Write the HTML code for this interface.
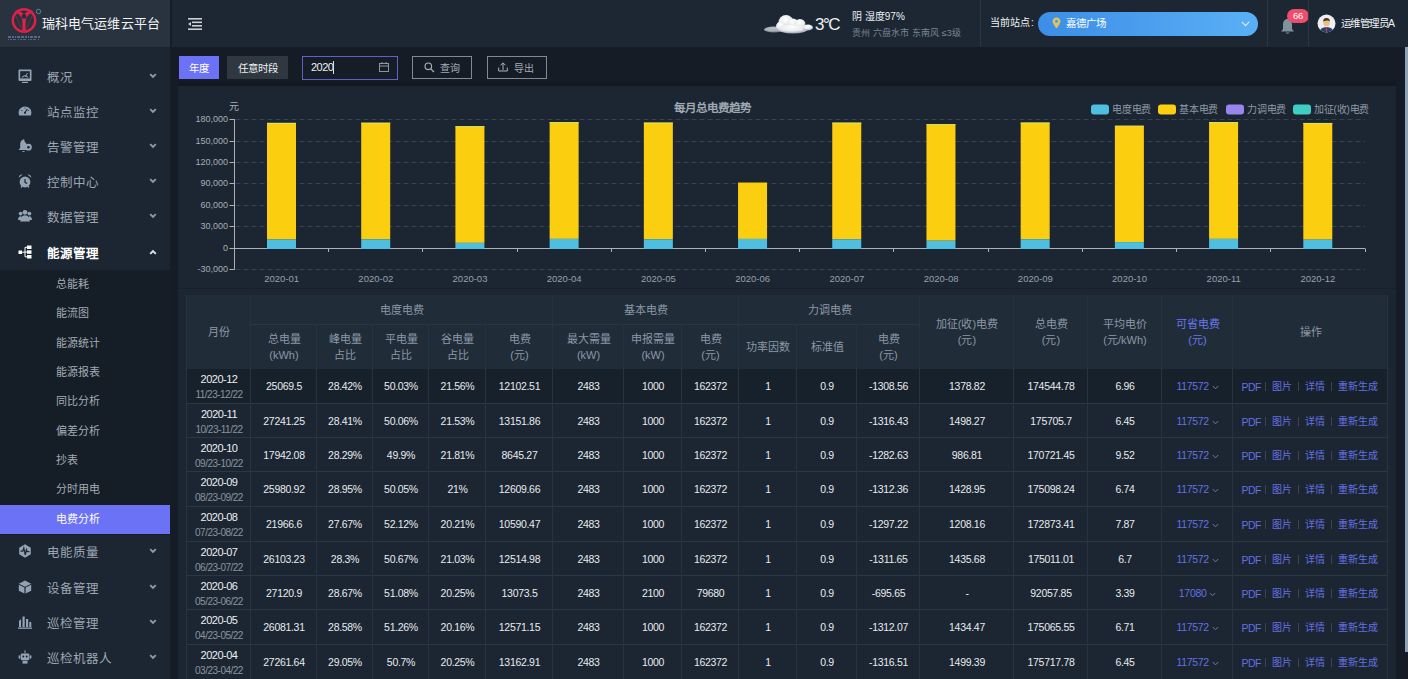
<!DOCTYPE html><html lang="zh-CN"><head><meta charset="utf-8"><title>电费分析</title><style>
*{margin:0;padding:0;box-sizing:border-box}
html,body{width:1408px;height:679px;overflow:hidden;background:#151c25;font-family:"Liberation Sans",sans-serif;color:#fff}
.a{position:absolute}
.t{position:absolute;white-space:nowrap;line-height:1}
.menu{position:absolute;left:0;width:170px;height:35px}
.menu .ic{position:absolute;left:18px;top:10px;width:14px;height:14px}
.menu .lb{position:absolute;left:47px;top:12px;font-size:12.5px;color:#9ba6b2;line-height:14px;white-space:nowrap}
.menu .ch{position:absolute;left:149px;top:14px;width:8px;height:6px}
.sub{position:absolute;left:0;width:170px;height:29px}
.sub .lb{position:absolute;left:56px;top:8px;font-size:11px;color:#a3acb6;line-height:13px;white-space:nowrap}
.cell{position:absolute;display:flex;align-items:center;justify-content:center;text-align:center;border-right:1px solid #2b3540;border-bottom:1px solid #2b3540}
.hd{color:#8795a4;font-size:11.5px;line-height:16px;background:#222c38}
.num{font-size:10.5px;letter-spacing:-0.3px;color:#e8ebee}
</style></head><body>
<div class="a" style="left:0;top:0;width:1408px;height:47px;background:#1c2733"></div>
<div class="a" style="left:0;top:0;width:170px;height:47px;background:#28333f"></div>
<div class="a" style="left:170px;top:0;width:2px;height:47px;background:#161d26"></div>
<svg class="a" style="left:6px;top:4px" width="38" height="40" viewBox="0 0 38 40">
<circle cx="18" cy="16.5" r="11.2" fill="none" stroke="#de2148" stroke-width="2.4"/>
<path d="M8.5 8.5 Q15 9.5 16.3 17 L16.6 28 L19.4 28 L19.7 17 Q21 9.5 27.5 8.5 L26 6.5 Q20.5 7 18 10.5 Q15.5 7 10 6.5 Z" fill="#de2148"/>
<circle cx="18" cy="12.5" r="2.4" fill="#26303c"/>
<path d="M10 12 Q13 18 16 26 M26 12 Q23 18 20 26" stroke="#de2148" stroke-width="0.8" fill="none" opacity="0.5"/>
<circle cx="32.5" cy="7.5" r="2.2" fill="none" stroke="#6f8a86" stroke-width="0.9"/>
<path d="M2 33 L34 33" stroke="#7484b8" stroke-width="1.6" stroke-dasharray="3,1,2,1,1,1,3,1" opacity="0.85"/>
<path d="M2 35.5 L34 35.5" stroke="#7484b8" stroke-width="1.2" stroke-dasharray="1,1,2,1,3,2" opacity="0.6"/>
</svg>
<div class="t" style="left:42px;top:17px;font-size:13px;line-height:13px;color:#f2f4f6;font-weight:500;letter-spacing:0.1px">瑞科电气运维云平台</div>
<svg class="a" style="left:188px;top:18px" width="15" height="12" viewBox="0 0 15 12">
<rect x="0" y="0" width="14" height="1.6" fill="#c9d0d8"/><rect x="4" y="3.5" width="10" height="1.6" fill="#c9d0d8"/>
<rect x="4" y="7" width="10" height="1.6" fill="#c9d0d8"/><rect x="0" y="10.4" width="14" height="1.6" fill="#c9d0d8"/>
<path d="M0 6 L3 4 L3 8 Z" fill="#c9d0d8"/></svg>
<svg class="a" style="left:762px;top:12px" width="54" height="24" viewBox="0 0 54 24">
<defs><radialGradient id="cg" cx="45%" cy="30%" r="75%"><stop offset="0" stop-color="#ffffff"/><stop offset="0.55" stop-color="#e8eaee"/><stop offset="1" stop-color="#8c939c"/></radialGradient>
<filter id="bl"><feGaussianBlur stdDeviation="0.5"/></filter></defs>
<g fill="url(#cg)" filter="url(#bl)">
<ellipse cx="12" cy="17.5" rx="10" ry="3" opacity="0.7"/>
<circle cx="24" cy="10.5" r="7.5"/><circle cx="31" cy="12" r="5.5"/><circle cx="38" cy="12.5" r="5.5"/><circle cx="19" cy="14.5" r="5"/>
<ellipse cx="31" cy="17" rx="15" ry="4.5"/><ellipse cx="46" cy="15.5" rx="5" ry="3"/>
</g></svg>
<div class="t" style="left:815px;top:15.5px;font-size:17px;letter-spacing:-1.5px;color:#eef2f4">3°C</div>
<div class="t" style="left:852px;top:12px;font-size:10px;color:#eef1f4;font-weight:500">阴 湿度97%</div>
<div class="t" style="left:852px;top:28.5px;font-size:9px;color:#7b8592;letter-spacing:0.1px">贵州 六盘水市 东南风 ≤3级</div>
<div class="a" style="left:980px;top:0;width:1px;height:47px;background:#2c3541"></div>
<div class="t" style="left:990px;top:18px;font-size:10px;color:#f0f2f4;font-weight:500">当前站点<span style="margin-left:1px">:</span></div>
<div class="a" style="left:1038px;top:12px;width:220px;height:24px;border-radius:12px;background:linear-gradient(90deg,#3c8de6,#5ab0f6)"></div>
<svg class="a" style="left:1052px;top:17px" width="9" height="12" viewBox="0 0 9 12"><path d="M4.5 0.5 C2 0.5 0.6 2.4 0.6 4.3 C0.6 7 4.5 11.5 4.5 11.5 C4.5 11.5 8.4 7 8.4 4.3 C8.4 2.4 7 0.5 4.5 0.5 Z" fill="#e0c35a"/><circle cx="4.5" cy="4.3" r="1.5" fill="#4a9bea"/></svg>
<div class="t" style="left:1066px;top:18px;font-size:10.5px;color:#fff">嘉德广场</div>
<svg class="a" style="left:1241px;top:21px" width="9" height="6" viewBox="0 0 9 6"><path d="M0.8 0.8 L4.5 4.6 L8.2 0.8" fill="none" stroke="#dbe8f6" stroke-width="1.2"/></svg>
<div class="a" style="left:1267px;top:0;width:1px;height:47px;background:#2c3541"></div>
<svg class="a" style="left:1280px;top:18px" width="15" height="17" viewBox="0 0 15 17"><path d="M7.5 1 C4.5 1 3 3.5 3 6.5 L3 11 L1 13.5 L14 13.5 L12 11 L12 6.5 C12 3.5 10.5 1 7.5 1 Z" fill="#7f929e"/><path d="M5.5 14.5 Q7.5 17 9.5 14.5 Z" fill="#7f929e"/></svg>
<div class="a" style="left:1287px;top:8.5px;width:22px;height:14px;border-radius:7px;background:#ee4d6b"></div>
<div class="t" style="left:1287px;top:11px;width:22px;text-align:center;font-size:9.5px;color:#fff;letter-spacing:-0.3px">66</div>
<div class="a" style="left:1308px;top:0;width:1px;height:47px;background:#2c3541"></div>
<svg class="a" style="left:1317px;top:14px" width="19" height="19" viewBox="0 0 19 19">
<defs><clipPath id="av"><circle cx="9.5" cy="9.5" r="9"/></clipPath></defs>
<circle cx="9.5" cy="9.5" r="9" fill="#eceef4"/>
<g clip-path="url(#av)"><path d="M2 19 Q3 13 9.5 13 Q16 13 17 19 Z" fill="#27406a"/><path d="M8.6 13 L10.4 13 L10 18 L9 18 Z" fill="#b04060"/>
<ellipse cx="9.5" cy="8.5" rx="3.2" ry="3.8" fill="#eac27a"/><path d="M6.2 7.5 Q6 4 9.5 4 Q13 4 12.8 7.5 Q11 5.6 6.2 7.5 Z" fill="#4a3520"/></g></svg>
<div class="t" style="left:1341px;top:18px;font-size:10.5px;color:#f0f2f4;font-weight:500;letter-spacing:-0.6px">运维管理员A</div>
<div class="a" style="left:1405px;top:47px;width:3px;height:605px;background:#8ea2b4"></div>
<div class="a" style="left:0;top:47px;width:170px;height:632px;background:#1b2632"></div>
<div class="a" style="left:0;top:270px;width:170px;height:265px;background:#151d26"></div>
<div class="a" style="left:0;top:505px;width:170px;height:29px;background:#6b72f6"></div>
<div class="menu" style="top:59px"><svg class="ic" width="14" height="14" viewBox="0 0 14 14"><rect x="0.5" y="0.5" width="13" height="11.5" rx="1" fill="#94a3b3"/><rect x="2.2" y="2.2" width="9.6" height="7.2" fill="#1c2530"/><path d="M3.6 8.6 A3.6 3.6 0 0 1 10.4 8.6 L9 8.6 A2.2 2.2 0 0 0 5 8.6 Z" fill="#94a3b3"/><path d="M7 8 L9.5 4" stroke="#94a3b3" stroke-width="1"/><rect x="4" y="12.8" width="6" height="1.2" fill="#94a3b3"/></svg><div class="lb">概况</div><svg class="ch" width="8" height="6" viewBox="0 0 8 6"><path d="M1.2 1.2 L4 4 L6.8 1.2" fill="none" stroke="#8d9aa8" stroke-width="1.9"/></svg></div>
<div class="menu" style="top:94px"><svg class="ic" width="14" height="14" viewBox="0 0 14 14"><path d="M1.2 11.5 A6.4 6.4 0 1 1 12.8 11.5 Z" fill="#94a3b3"/><path d="M7 8.5 L9.3 5" stroke="#1c2530" stroke-width="1.1"/><circle cx="7" cy="8.8" r="1.1" fill="#1c2530"/><circle cx="3.8" cy="6.5" r="0.6" fill="#1c2530"/><circle cx="7" cy="4" r="0.6" fill="#1c2530"/><circle cx="10.2" cy="6.5" r="0.6" fill="#1c2530"/><path d="M#94a3b3" fill="none"/></svg><div class="lb">站点监控</div><svg class="ch" width="8" height="6" viewBox="0 0 8 6"><path d="M1.2 1.2 L4 4 L6.8 1.2" fill="none" stroke="#8d9aa8" stroke-width="1.9"/></svg></div>
<div class="menu" style="top:129px"><svg class="ic" width="14" height="14" viewBox="0 0 14 14"><path d="M5.5 1 C3 1 2.2 3 2.2 5.5 L2.2 8.8 L0.6 11 L9.5 11 L8.6 9 L8.6 5" fill="#94a3b3"/><circle cx="5.5" cy="1.2" r="1" fill="#94a3b3"/><circle cx="10.4" cy="8.2" r="3.4" fill="#94a3b3"/><circle cx="10.4" cy="8.2" r="1.3" fill="#1c2530"/><path d="M4 12 Q5.5 14 7 12 Z" fill="#94a3b3"/></svg><div class="lb">告警管理</div><svg class="ch" width="8" height="6" viewBox="0 0 8 6"><path d="M1.2 1.2 L4 4 L6.8 1.2" fill="none" stroke="#8d9aa8" stroke-width="1.9"/></svg></div>
<div class="menu" style="top:164px"><svg class="ic" width="14" height="14" viewBox="0 0 14 14"><circle cx="7" cy="8" r="5.4" fill="#94a3b3"/><path d="M0.8 3.8 A3 3 0 0 1 4.6 0.6 Z M13.2 3.8 A3 3 0 0 0 9.4 0.6 Z" fill="#94a3b3"/><path d="M3 13.5 L4.3 12 M11 13.5 L9.7 12" stroke="#94a3b3" stroke-width="1.2"/><path d="M7 5 L7 8.3 L9.2 9.6" fill="none" stroke="#1c2530" stroke-width="1.2"/></svg><div class="lb">控制中心</div><svg class="ch" width="8" height="6" viewBox="0 0 8 6"><path d="M1.2 1.2 L4 4 L6.8 1.2" fill="none" stroke="#8d9aa8" stroke-width="1.9"/></svg></div>
<div class="menu" style="top:199px"><svg class="ic" width="14" height="14" viewBox="0 0 14 14"><circle cx="7" cy="3.3" r="2.4" fill="#94a3b3"/><circle cx="2.6" cy="4.6" r="1.9" fill="#94a3b3"/><circle cx="11.4" cy="4.6" r="1.9" fill="#94a3b3"/><path d="M2.2 12.5 Q2.2 6.3 7 6.3 Q11.8 6.3 11.8 12.5 Z" fill="#94a3b3"/><path d="M0 11 Q0 7.2 3 7.2 L3.2 11 Z M14 11 Q14 7.2 11 7.2 L10.8 11 Z" fill="#94a3b3"/></svg><div class="lb">数据管理</div><svg class="ch" width="8" height="6" viewBox="0 0 8 6"><path d="M1.2 1.2 L4 4 L6.8 1.2" fill="none" stroke="#8d9aa8" stroke-width="1.9"/></svg></div>
<div class="menu" style="top:235px"><svg class="ic" width="14" height="14" viewBox="0 0 14 14"><rect x="0.5" y="5.5" width="3.5" height="3.5" fill="#ffffff"/><rect x="9" y="0.5" width="4.5" height="3.5" fill="#ffffff"/><rect x="9" y="5.3" width="4.5" height="3.5" fill="#ffffff"/><rect x="9" y="10" width="4.5" height="3.5" fill="#ffffff"/><path d="M4 7.2 L7 7.2 M7 2.3 L7 11.8 M7 2.3 L9 2.3 M7 7 L9 7 M7 11.8 L9 11.8" stroke="#ffffff" stroke-width="1" fill="none"/><path d="M#fff" fill="none"/></svg><div class="lb" style="color:#fff;font-weight:bold">能源管理</div><svg class="ch" width="8" height="6" viewBox="0 0 8 6"><path d="M1.2 4.8 L4 2 L6.8 4.8" fill="none" stroke="#e0e4e8" stroke-width="1.9"/></svg></div>
<div class="sub" style="top:270px"><div class="lb" style="color:#a3acb6">总能耗</div></div>
<div class="sub" style="top:299px"><div class="lb" style="color:#a3acb6">能流图</div></div>
<div class="sub" style="top:329px"><div class="lb" style="color:#a3acb6">能源统计</div></div>
<div class="sub" style="top:358px"><div class="lb" style="color:#a3acb6">能源报表</div></div>
<div class="sub" style="top:387px"><div class="lb" style="color:#a3acb6">同比分析</div></div>
<div class="sub" style="top:417px"><div class="lb" style="color:#a3acb6">偏差分析</div></div>
<div class="sub" style="top:446px"><div class="lb" style="color:#a3acb6">抄表</div></div>
<div class="sub" style="top:475px"><div class="lb" style="color:#a3acb6">分时用电</div></div>
<div class="sub" style="top:505px"><div class="lb" style="color:#ffffff">电费分析</div></div>
<div class="menu" style="top:534px"><svg class="ic" width="14" height="14" viewBox="0 0 14 14"><path d="M7 0.3 L12.8 3.65 L12.8 10.35 L7 13.7 L1.2 10.35 L1.2 3.65 Z" fill="#94a3b3"/><path d="M2.6 7.2 L4.8 7.2 L5.8 4 L7.3 11 L8.4 5.6 L9.2 7.6 L11.4 7.6" fill="none" stroke="#1c2530" stroke-width="1.2"/></svg><div class="lb">电能质量</div><svg class="ch" width="8" height="6" viewBox="0 0 8 6"><path d="M1.2 1.2 L4 4 L6.8 1.2" fill="none" stroke="#8d9aa8" stroke-width="1.9"/></svg></div>
<div class="menu" style="top:570px"><svg class="ic" width="14" height="14" viewBox="0 0 14 14"><path d="M7 0.6 L13.2 3.7 L7 6.8 L0.8 3.7 Z" fill="#94a3b3"/><path d="M0.8 4.8 L6.4 7.6 L6.4 13.6 L0.8 10.8 Z M13.2 4.8 L7.6 7.6 L7.6 13.6 L13.2 10.8 Z" fill="#94a3b3"/></svg><div class="lb">设备管理</div><svg class="ch" width="8" height="6" viewBox="0 0 8 6"><path d="M1.2 1.2 L4 4 L6.8 1.2" fill="none" stroke="#8d9aa8" stroke-width="1.9"/></svg></div>
<div class="menu" style="top:605px"><svg class="ic" width="14" height="14" viewBox="0 0 14 14"><path d="M1 12 L1 6 L3 4 L3 12 Z" fill="#94a3b3"/><rect x="4.5" y="1.5" width="2.2" height="10.5" fill="#94a3b3"/><rect x="8" y="4" width="2.2" height="8" fill="#94a3b3"/><rect x="11.3" y="7" width="2" height="5" fill="#94a3b3"/><rect x="0" y="12.5" width="14" height="1.3" fill="#94a3b3"/></svg><div class="lb">巡检管理</div><svg class="ch" width="8" height="6" viewBox="0 0 8 6"><path d="M1.2 1.2 L4 4 L6.8 1.2" fill="none" stroke="#8d9aa8" stroke-width="1.9"/></svg></div>
<div class="menu" style="top:640px"><svg class="ic" width="14" height="14" viewBox="0 0 14 14"><rect x="2.8" y="3.5" width="8.4" height="6.8" rx="1" fill="#94a3b3"/><rect x="4.5" y="10.8" width="5" height="2.8" fill="#94a3b3"/><rect x="6.5" y="0.3" width="1" height="3" fill="#94a3b3"/><rect x="0.6" y="5.3" width="1.8" height="3.4" rx="0.8" fill="#94a3b3"/><rect x="11.6" y="5.3" width="1.8" height="3.4" rx="0.8" fill="#94a3b3"/><circle cx="5.3" cy="6.6" r="1" fill="#1c2530"/><circle cx="8.7" cy="6.6" r="1" fill="#1c2530"/></svg><div class="lb">巡检机器人</div><svg class="ch" width="8" height="6" viewBox="0 0 8 6"><path d="M1.2 1.2 L4 4 L6.8 1.2" fill="none" stroke="#8d9aa8" stroke-width="1.9"/></svg></div>
<div class="a" style="left:179px;top:56px;width:40px;height:23px;background:#6b72f6"></div>
<div class="t" style="left:179px;top:62.5px;width:40px;text-align:center;font-size:10.5px;color:#fff">年度</div>
<div class="a" style="left:227px;top:56px;width:61px;height:23px;background:#2f3741"></div>
<div class="t" style="left:227px;top:62.5px;width:61px;text-align:center;font-size:10.5px;color:#eef0f2">任意时段</div>
<div class="a" style="left:302px;top:55.5px;width:96px;height:24px;border:1.5px solid #5d62c8;background:#161d27"></div>
<div class="t" style="left:311px;top:62px;font-size:11px;color:#eef0f2;letter-spacing:-0.5px">2020</div>
<div class="a" style="left:333px;top:61px;width:1px;height:13px;background:#e0e0e0"></div>
<svg class="a" style="left:379px;top:62px" width="10" height="10" viewBox="0 0 10 10"><rect x="0.5" y="1.5" width="9" height="8" fill="none" stroke="#9aa4ae" stroke-width="0.9"/><path d="M0.5 4 L9.5 4 M3 0 L3 2 M7 0 L7 2" stroke="#9aa4ae" stroke-width="0.9"/></svg>
<div class="a" style="left:412px;top:56px;width:60px;height:23px;border:1px solid #7f8a96"></div>
<svg class="a" style="left:424px;top:62px" width="11" height="11" viewBox="0 0 11 11"><circle cx="4.3" cy="4.3" r="3.3" fill="none" stroke="#aab3bd" stroke-width="1.1"/><path d="M6.8 6.8 L10 10" stroke="#aab3bd" stroke-width="1.2"/></svg>
<div class="t" style="left:440px;top:63.5px;font-size:10px;color:#a3acb6">查询</div>
<div class="a" style="left:487px;top:56px;width:60px;height:23px;border:1px solid #7f8a96"></div>
<svg class="a" style="left:498px;top:62px" width="10" height="10" viewBox="0 0 10 10"><path d="M5 1 L5 8 M2.5 3.3 L5 0.8 L7.5 3.3 M0.7 5.5 L0.7 9 L9.3 9 L9.3 5.5" fill="none" stroke="#aab3bd" stroke-width="1"/></svg>
<div class="t" style="left:514px;top:63.5px;font-size:10px;color:#a3acb6">导出</div>
<div class="a" style="left:178px;top:86px;width:1218px;height:593px;background:#1b2632"></div>
<div class="a" style="left:178px;top:288px;width:1218px;height:1px;background:#18212b"></div><div class="a" style="left:178px;top:81px;width:1218px;height:5px;background:#121922"></div>
<svg class="a" style="left:178px;top:85px" width="1218" height="202" viewBox="178 85 1218 202"><line x1="235.5" y1="119.5" x2="1365.0" y2="119.5" stroke="#38424e" stroke-width="1" stroke-dasharray="5,3"/><line x1="229.5" y1="119.5" x2="234.5" y2="119.5" stroke="#a9b1ba" stroke-width="1"/><text x="228.0" y="122.0" text-anchor="end" font-size="9" fill="#a5aeb8" font-family="Liberation Sans">180,000</text><line x1="235.5" y1="141.5" x2="1365.0" y2="141.5" stroke="#38424e" stroke-width="1" stroke-dasharray="5,3"/><line x1="229.5" y1="141.5" x2="234.5" y2="141.5" stroke="#a9b1ba" stroke-width="1"/><text x="228.0" y="144.0" text-anchor="end" font-size="9" fill="#a5aeb8" font-family="Liberation Sans">150,000</text><line x1="235.5" y1="162.5" x2="1365.0" y2="162.5" stroke="#38424e" stroke-width="1" stroke-dasharray="5,3"/><line x1="229.5" y1="162.5" x2="234.5" y2="162.5" stroke="#a9b1ba" stroke-width="1"/><text x="228.0" y="165.0" text-anchor="end" font-size="9" fill="#a5aeb8" font-family="Liberation Sans">120,000</text><line x1="235.5" y1="183.5" x2="1365.0" y2="183.5" stroke="#38424e" stroke-width="1" stroke-dasharray="5,3"/><line x1="229.5" y1="183.5" x2="234.5" y2="183.5" stroke="#a9b1ba" stroke-width="1"/><text x="228.0" y="186.0" text-anchor="end" font-size="9" fill="#a5aeb8" font-family="Liberation Sans">90,000</text><line x1="235.5" y1="205.5" x2="1365.0" y2="205.5" stroke="#38424e" stroke-width="1" stroke-dasharray="5,3"/><line x1="229.5" y1="205.5" x2="234.5" y2="205.5" stroke="#a9b1ba" stroke-width="1"/><text x="228.0" y="208.0" text-anchor="end" font-size="9" fill="#a5aeb8" font-family="Liberation Sans">60,000</text><line x1="235.5" y1="226.5" x2="1365.0" y2="226.5" stroke="#38424e" stroke-width="1" stroke-dasharray="5,3"/><line x1="229.5" y1="226.5" x2="234.5" y2="226.5" stroke="#a9b1ba" stroke-width="1"/><text x="228.0" y="229.0" text-anchor="end" font-size="9" fill="#a5aeb8" font-family="Liberation Sans">30,000</text><line x1="235.5" y1="269.5" x2="1365.0" y2="269.5" stroke="#38424e" stroke-width="1" stroke-dasharray="5,3"/><line x1="229.5" y1="269.5" x2="234.5" y2="269.5" stroke="#a9b1ba" stroke-width="1"/><text x="228.0" y="272.0" text-anchor="end" font-size="9" fill="#a5aeb8" font-family="Liberation Sans">-30,000</text><text x="228.0" y="251.0" text-anchor="end" font-size="9" fill="#a5aeb8" font-family="Liberation Sans">0</text><text x="229" y="109.5" font-size="10" fill="#a5aeb8">元</text><text x="281.6" y="281.5" text-anchor="middle" font-size="9.5" fill="#98a1ab">2020-01</text><text x="375.8" y="281.5" text-anchor="middle" font-size="9.5" fill="#98a1ab">2020-02</text><text x="470.0" y="281.5" text-anchor="middle" font-size="9.5" fill="#98a1ab">2020-03</text><text x="564.2" y="281.5" text-anchor="middle" font-size="9.5" fill="#98a1ab">2020-04</text><text x="658.4" y="281.5" text-anchor="middle" font-size="9.5" fill="#98a1ab">2020-05</text><text x="752.6" y="281.5" text-anchor="middle" font-size="9.5" fill="#98a1ab">2020-06</text><text x="846.9" y="281.5" text-anchor="middle" font-size="9.5" fill="#98a1ab">2020-07</text><text x="941.1" y="281.5" text-anchor="middle" font-size="9.5" fill="#98a1ab">2020-08</text><text x="1035.3" y="281.5" text-anchor="middle" font-size="9.5" fill="#98a1ab">2020-09</text><text x="1129.5" y="281.5" text-anchor="middle" font-size="9.5" fill="#98a1ab">2020-10</text><text x="1223.7" y="281.5" text-anchor="middle" font-size="9.5" fill="#98a1ab">2020-11</text><text x="1317.9" y="281.5" text-anchor="middle" font-size="9.5" fill="#98a1ab">2020-12</text><line x1="229.5" y1="248.5" x2="1365.0" y2="248.5" stroke="#a9b1ba" stroke-width="1"/><line x1="234.5" y1="248.5" x2="234.5" y2="252.0" stroke="#a9b1ba" stroke-width="1"/><line x1="328.5" y1="248.5" x2="328.5" y2="252.0" stroke="#a9b1ba" stroke-width="1"/><line x1="422.5" y1="248.5" x2="422.5" y2="252.0" stroke="#a9b1ba" stroke-width="1"/><line x1="517.5" y1="248.5" x2="517.5" y2="252.0" stroke="#a9b1ba" stroke-width="1"/><line x1="611.5" y1="248.5" x2="611.5" y2="252.0" stroke="#a9b1ba" stroke-width="1"/><line x1="705.5" y1="248.5" x2="705.5" y2="252.0" stroke="#a9b1ba" stroke-width="1"/><line x1="799.5" y1="248.5" x2="799.5" y2="252.0" stroke="#a9b1ba" stroke-width="1"/><line x1="893.5" y1="248.5" x2="893.5" y2="252.0" stroke="#a9b1ba" stroke-width="1"/><line x1="988.5" y1="248.5" x2="988.5" y2="252.0" stroke="#a9b1ba" stroke-width="1"/><line x1="1082.5" y1="248.5" x2="1082.5" y2="252.0" stroke="#a9b1ba" stroke-width="1"/><line x1="1176.5" y1="248.5" x2="1176.5" y2="252.0" stroke="#a9b1ba" stroke-width="1"/><line x1="1270.5" y1="248.5" x2="1270.5" y2="252.0" stroke="#a9b1ba" stroke-width="1"/><line x1="1365.5" y1="248.5" x2="1365.5" y2="252.0" stroke="#a9b1ba" stroke-width="1"/><line x1="234.5" y1="119" x2="234.5" y2="269.5" stroke="#a9b1ba" stroke-width="1"/><rect x="267.00" y="122.87" width="29" height="116.62" fill="#fcce10"/><rect x="267.00" y="239.49" width="29" height="9.51" fill="#4ebfe0"/><rect x="267.00" y="122.87" width="29" height="1.00" fill="#d6e66a"/><rect x="361.21" y="122.72" width="29" height="116.62" fill="#fcce10"/><rect x="361.21" y="239.34" width="29" height="9.66" fill="#4ebfe0"/><rect x="361.21" y="122.72" width="29" height="1.00" fill="#d6e66a"/><rect x="455.42" y="126.23" width="29" height="116.62" fill="#fcce10"/><rect x="455.42" y="242.85" width="29" height="6.15" fill="#4ebfe0"/><rect x="455.42" y="126.23" width="29" height="0.93" fill="#d6e66a"/><rect x="549.63" y="122.13" width="29" height="116.74" fill="#fcce10"/><rect x="549.63" y="238.87" width="29" height="10.13" fill="#4ebfe0"/><rect x="549.63" y="122.13" width="29" height="1.00" fill="#d6e66a"/><rect x="643.84" y="122.60" width="29" height="116.69" fill="#fcce10"/><rect x="643.84" y="239.29" width="29" height="9.71" fill="#4ebfe0"/><rect x="643.84" y="122.60" width="29" height="1.00" fill="#d6e66a"/><rect x="738.05" y="182.53" width="29" height="56.40" fill="#fcce10"/><rect x="738.05" y="238.93" width="29" height="10.07" fill="#4ebfe0"/><rect x="832.25" y="122.64" width="29" height="116.70" fill="#fcce10"/><rect x="832.25" y="239.33" width="29" height="9.67" fill="#4ebfe0"/><rect x="832.25" y="122.64" width="29" height="1.00" fill="#d6e66a"/><rect x="926.46" y="124.18" width="29" height="116.53" fill="#fcce10"/><rect x="926.46" y="240.71" width="29" height="8.29" fill="#4ebfe0"/><rect x="926.46" y="124.18" width="29" height="0.87" fill="#d6e66a"/><rect x="1020.67" y="122.57" width="29" height="116.69" fill="#fcce10"/><rect x="1020.67" y="239.26" width="29" height="9.74" fill="#4ebfe0"/><rect x="1020.67" y="122.57" width="29" height="1.00" fill="#d6e66a"/><rect x="1114.88" y="125.73" width="29" height="116.37" fill="#fcce10"/><rect x="1114.88" y="242.10" width="29" height="6.90" fill="#4ebfe0"/><rect x="1114.88" y="125.73" width="29" height="0.71" fill="#d6e66a"/><rect x="1209.09" y="122.13" width="29" height="116.74" fill="#fcce10"/><rect x="1209.09" y="238.87" width="29" height="10.13" fill="#4ebfe0"/><rect x="1209.09" y="122.13" width="29" height="1.00" fill="#d6e66a"/><rect x="1303.30" y="122.97" width="29" height="116.65" fill="#fcce10"/><rect x="1303.30" y="239.63" width="29" height="9.37" fill="#4ebfe0"/><rect x="1303.30" y="122.97" width="29" height="0.99" fill="#d6e66a"/><text x="712" y="112" text-anchor="middle" font-size="11.5" font-weight="bold" fill="#a0a9b3">每月总电费趋势</text><rect x="1091" y="104.5" width="18" height="10" rx="3" fill="#4ebfe0"/><text x="1112" y="113" font-size="10" fill="#8f99a4" letter-spacing="-0.2">电度电费</text><rect x="1158" y="104.5" width="18" height="10" rx="3" fill="#fcce10"/><text x="1179" y="113" font-size="10" fill="#8f99a4" letter-spacing="-0.2">基本电费</text><rect x="1226" y="104.5" width="18" height="10" rx="3" fill="#9886ee"/><text x="1247" y="113" font-size="10" fill="#8f99a4" letter-spacing="-0.2">力调电费</text><rect x="1293" y="104.5" width="18" height="10" rx="3" fill="#3dd0c2"/><text x="1314" y="113" font-size="10" fill="#8f99a4" letter-spacing="-0.2">加征(收)电费</text></svg>
<div class="a" style="left:187px;top:295px;width:1201px;height:74px;background:#212c39"></div><div class="a" style="left:187px;top:295px;width:64px;height:74px;display:flex;align-items:center;justify-content:center;text-align:center;color:#8b98a6;font-size:11px;line-height:16px;">月份</div><div class="a" style="left:251px;top:295px;width:302px;height:29px;display:flex;align-items:center;justify-content:center;text-align:center;color:#8b98a6;font-size:11px;line-height:16px;">电度电费</div><div class="a" style="left:553px;top:295px;width:186px;height:29px;display:flex;align-items:center;justify-content:center;text-align:center;color:#8b98a6;font-size:11px;line-height:16px;">基本电费</div><div class="a" style="left:739px;top:295px;width:181px;height:29px;display:flex;align-items:center;justify-content:center;text-align:center;color:#8b98a6;font-size:11px;line-height:16px;">力调电费</div><div class="a" style="left:920px;top:295px;width:94px;height:74px;display:flex;align-items:center;justify-content:center;text-align:center;color:#8b98a6;font-size:11px;line-height:16px;">加征(收)电费<br>(元)</div><div class="a" style="left:1014px;top:295px;width:74px;height:74px;display:flex;align-items:center;justify-content:center;text-align:center;color:#8b98a6;font-size:11px;line-height:16px;">总电费<br>(元)</div><div class="a" style="left:1088px;top:295px;width:74px;height:74px;display:flex;align-items:center;justify-content:center;text-align:center;color:#8b98a6;font-size:11px;line-height:16px;">平均电价<br>(元/kWh)</div><div class="a" style="left:1162px;top:295px;width:71px;height:74px;display:flex;align-items:center;justify-content:center;text-align:center;color:#8b98a6;font-size:11px;line-height:16px;color:#6a78f0">可省电费<br>(元)</div><div class="a" style="left:1233px;top:295px;width:155px;height:74px;display:flex;align-items:center;justify-content:center;text-align:center;color:#8b98a6;font-size:11px;line-height:16px;">操作</div><div class="a" style="left:251px;top:324px;width:66px;height:45px;display:flex;align-items:center;justify-content:center;text-align:center;color:#8b98a6;font-size:11px;line-height:16px;">总电量<br>(kWh)</div><div class="a" style="left:317px;top:324px;width:56px;height:45px;display:flex;align-items:center;justify-content:center;text-align:center;color:#8b98a6;font-size:11px;line-height:16px;">峰电量<br>占比</div><div class="a" style="left:373px;top:324px;width:56px;height:45px;display:flex;align-items:center;justify-content:center;text-align:center;color:#8b98a6;font-size:11px;line-height:16px;">平电量<br>占比</div><div class="a" style="left:429px;top:324px;width:57px;height:45px;display:flex;align-items:center;justify-content:center;text-align:center;color:#8b98a6;font-size:11px;line-height:16px;">谷电量<br>占比</div><div class="a" style="left:486px;top:324px;width:67px;height:45px;display:flex;align-items:center;justify-content:center;text-align:center;color:#8b98a6;font-size:11px;line-height:16px;">电费<br>(元)</div><div class="a" style="left:553px;top:324px;width:71px;height:45px;display:flex;align-items:center;justify-content:center;text-align:center;color:#8b98a6;font-size:11px;line-height:16px;">最大需量<br>(kW)</div><div class="a" style="left:624px;top:324px;width:58px;height:45px;display:flex;align-items:center;justify-content:center;text-align:center;color:#8b98a6;font-size:11px;line-height:16px;">申报需量<br>(kW)</div><div class="a" style="left:682px;top:324px;width:57px;height:45px;display:flex;align-items:center;justify-content:center;text-align:center;color:#8b98a6;font-size:11px;line-height:16px;">电费<br>(元)</div><div class="a" style="left:739px;top:324px;width:58px;height:45px;display:flex;align-items:center;justify-content:center;text-align:center;color:#8b98a6;font-size:11px;line-height:16px;">功率因数</div><div class="a" style="left:797px;top:324px;width:60px;height:45px;display:flex;align-items:center;justify-content:center;text-align:center;color:#8b98a6;font-size:11px;line-height:16px;">标准值</div><div class="a" style="left:857px;top:324px;width:63px;height:45px;display:flex;align-items:center;justify-content:center;text-align:center;color:#8b98a6;font-size:11px;line-height:16px;">电费<br>(元)</div><div class="a" style="left:251px;top:324px;width:669px;height:1px;background:#2b3743"></div><div class="a" style="left:187px;top:369px;width:1201px;height:1px;background:#2b3743"></div><div class="a" style="left:187px;top:369px;width:1201px;height:35px;background:#17212b"></div><div class="a" style="left:187px;top:403px;width:1201px;height:1px;background:#2b3743"></div><div class="t" style="left:187px;top:374.0px;width:64px;text-align:center;font-size:11px;letter-spacing:-0.5px;color:#eceff2">2020-12</div><div class="t" style="left:187px;top:390.0px;width:64px;text-align:center;font-size:10px;letter-spacing:-0.5px;color:#8a949f">11/23-12/22</div><div class="t" style="left:251px;top:381.0px;width:66px;text-align:center;font-size:10.5px;letter-spacing:-0.3px;color:#e8ebee">25069.5</div><div class="t" style="left:317px;top:381.0px;width:56px;text-align:center;font-size:10.5px;letter-spacing:-0.3px;color:#e8ebee">28.42%</div><div class="t" style="left:373px;top:381.0px;width:56px;text-align:center;font-size:10.5px;letter-spacing:-0.3px;color:#e8ebee">50.03%</div><div class="t" style="left:429px;top:381.0px;width:57px;text-align:center;font-size:10.5px;letter-spacing:-0.3px;color:#e8ebee">21.56%</div><div class="t" style="left:486px;top:381.0px;width:67px;text-align:center;font-size:10.5px;letter-spacing:-0.3px;color:#e8ebee">12102.51</div><div class="t" style="left:553px;top:381.0px;width:71px;text-align:center;font-size:10.5px;letter-spacing:-0.3px;color:#e8ebee">2483</div><div class="t" style="left:624px;top:381.0px;width:58px;text-align:center;font-size:10.5px;letter-spacing:-0.3px;color:#e8ebee">1000</div><div class="t" style="left:682px;top:381.0px;width:57px;text-align:center;font-size:10.5px;letter-spacing:-0.3px;color:#e8ebee">162372</div><div class="t" style="left:739px;top:381.0px;width:58px;text-align:center;font-size:10.5px;letter-spacing:-0.3px;color:#e8ebee">1</div><div class="t" style="left:797px;top:381.0px;width:60px;text-align:center;font-size:10.5px;letter-spacing:-0.3px;color:#e8ebee">0.9</div><div class="t" style="left:857px;top:381.0px;width:63px;text-align:center;font-size:10.5px;letter-spacing:-0.3px;color:#e8ebee">-1308.56</div><div class="t" style="left:920px;top:381.0px;width:94px;text-align:center;font-size:10.5px;letter-spacing:-0.3px;color:#e8ebee">1378.82</div><div class="t" style="left:1014px;top:381.0px;width:74px;text-align:center;font-size:10.5px;letter-spacing:-0.3px;color:#e8ebee">174544.78</div><div class="t" style="left:1088px;top:381.0px;width:74px;text-align:center;font-size:10.5px;letter-spacing:-0.3px;color:#e8ebee">6.96</div><div class="t" style="left:1162px;top:381.0px;width:71px;text-align:center;font-size:10.5px;letter-spacing:-0.3px;color:#6470e0">117572 <svg width="7" height="5" viewBox="0 0 7 5" style="vertical-align:middle"><path d="M0.8 1 L3.5 3.8 L6.2 1" fill="none" stroke="#7a84a8" stroke-width="0.9"/></svg></div><div class="t" style="left:1241.5px;top:381.5px;font-size:10.5px;color:#6470e0;letter-spacing:-0.6px">PDF</div><div class="t" style="left:1271.5px;top:381.5px;font-size:10px;color:#6470e0">图片</div><div class="t" style="left:1304.5px;top:381.5px;font-size:10px;color:#6470e0">详情</div><div class="t" style="left:1338px;top:381.5px;font-size:10px;color:#6470e0">重新生成</div><div class="a" style="left:1265px;top:382px;width:1px;height:9px;background:#3a4452"></div><div class="a" style="left:1298px;top:382px;width:1px;height:9px;background:#3a4452"></div><div class="a" style="left:1331px;top:382px;width:1px;height:9px;background:#3a4452"></div><div class="a" style="left:187px;top:404px;width:1201px;height:34px;background:#1b2632"></div><div class="a" style="left:187px;top:437px;width:1201px;height:1px;background:#2b3743"></div><div class="t" style="left:187px;top:409.0px;width:64px;text-align:center;font-size:11px;letter-spacing:-0.5px;color:#eceff2">2020-11</div><div class="t" style="left:187px;top:425.0px;width:64px;text-align:center;font-size:10px;letter-spacing:-0.5px;color:#8a949f">10/23-11/22</div><div class="t" style="left:251px;top:416.0px;width:66px;text-align:center;font-size:10.5px;letter-spacing:-0.3px;color:#e8ebee">27241.25</div><div class="t" style="left:317px;top:416.0px;width:56px;text-align:center;font-size:10.5px;letter-spacing:-0.3px;color:#e8ebee">28.41%</div><div class="t" style="left:373px;top:416.0px;width:56px;text-align:center;font-size:10.5px;letter-spacing:-0.3px;color:#e8ebee">50.06%</div><div class="t" style="left:429px;top:416.0px;width:57px;text-align:center;font-size:10.5px;letter-spacing:-0.3px;color:#e8ebee">21.53%</div><div class="t" style="left:486px;top:416.0px;width:67px;text-align:center;font-size:10.5px;letter-spacing:-0.3px;color:#e8ebee">13151.86</div><div class="t" style="left:553px;top:416.0px;width:71px;text-align:center;font-size:10.5px;letter-spacing:-0.3px;color:#e8ebee">2483</div><div class="t" style="left:624px;top:416.0px;width:58px;text-align:center;font-size:10.5px;letter-spacing:-0.3px;color:#e8ebee">1000</div><div class="t" style="left:682px;top:416.0px;width:57px;text-align:center;font-size:10.5px;letter-spacing:-0.3px;color:#e8ebee">162372</div><div class="t" style="left:739px;top:416.0px;width:58px;text-align:center;font-size:10.5px;letter-spacing:-0.3px;color:#e8ebee">1</div><div class="t" style="left:797px;top:416.0px;width:60px;text-align:center;font-size:10.5px;letter-spacing:-0.3px;color:#e8ebee">0.9</div><div class="t" style="left:857px;top:416.0px;width:63px;text-align:center;font-size:10.5px;letter-spacing:-0.3px;color:#e8ebee">-1316.43</div><div class="t" style="left:920px;top:416.0px;width:94px;text-align:center;font-size:10.5px;letter-spacing:-0.3px;color:#e8ebee">1498.27</div><div class="t" style="left:1014px;top:416.0px;width:74px;text-align:center;font-size:10.5px;letter-spacing:-0.3px;color:#e8ebee">175705.7</div><div class="t" style="left:1088px;top:416.0px;width:74px;text-align:center;font-size:10.5px;letter-spacing:-0.3px;color:#e8ebee">6.45</div><div class="t" style="left:1162px;top:416.0px;width:71px;text-align:center;font-size:10.5px;letter-spacing:-0.3px;color:#6470e0">117572 <svg width="7" height="5" viewBox="0 0 7 5" style="vertical-align:middle"><path d="M0.8 1 L3.5 3.8 L6.2 1" fill="none" stroke="#7a84a8" stroke-width="0.9"/></svg></div><div class="t" style="left:1241.5px;top:416.5px;font-size:10.5px;color:#6470e0;letter-spacing:-0.6px">PDF</div><div class="t" style="left:1271.5px;top:416.5px;font-size:10px;color:#6470e0">图片</div><div class="t" style="left:1304.5px;top:416.5px;font-size:10px;color:#6470e0">详情</div><div class="t" style="left:1338px;top:416.5px;font-size:10px;color:#6470e0">重新生成</div><div class="a" style="left:1265px;top:417px;width:1px;height:9px;background:#3a4452"></div><div class="a" style="left:1298px;top:417px;width:1px;height:9px;background:#3a4452"></div><div class="a" style="left:1331px;top:417px;width:1px;height:9px;background:#3a4452"></div><div class="a" style="left:187px;top:438px;width:1201px;height:34px;background:#1b2632"></div><div class="a" style="left:187px;top:471px;width:1201px;height:1px;background:#2b3743"></div><div class="t" style="left:187px;top:443.0px;width:64px;text-align:center;font-size:11px;letter-spacing:-0.5px;color:#eceff2">2020-10</div><div class="t" style="left:187px;top:459.0px;width:64px;text-align:center;font-size:10px;letter-spacing:-0.5px;color:#8a949f">09/23-10/22</div><div class="t" style="left:251px;top:450.0px;width:66px;text-align:center;font-size:10.5px;letter-spacing:-0.3px;color:#e8ebee">17942.08</div><div class="t" style="left:317px;top:450.0px;width:56px;text-align:center;font-size:10.5px;letter-spacing:-0.3px;color:#e8ebee">28.29%</div><div class="t" style="left:373px;top:450.0px;width:56px;text-align:center;font-size:10.5px;letter-spacing:-0.3px;color:#e8ebee">49.9%</div><div class="t" style="left:429px;top:450.0px;width:57px;text-align:center;font-size:10.5px;letter-spacing:-0.3px;color:#e8ebee">21.81%</div><div class="t" style="left:486px;top:450.0px;width:67px;text-align:center;font-size:10.5px;letter-spacing:-0.3px;color:#e8ebee">8645.27</div><div class="t" style="left:553px;top:450.0px;width:71px;text-align:center;font-size:10.5px;letter-spacing:-0.3px;color:#e8ebee">2483</div><div class="t" style="left:624px;top:450.0px;width:58px;text-align:center;font-size:10.5px;letter-spacing:-0.3px;color:#e8ebee">1000</div><div class="t" style="left:682px;top:450.0px;width:57px;text-align:center;font-size:10.5px;letter-spacing:-0.3px;color:#e8ebee">162372</div><div class="t" style="left:739px;top:450.0px;width:58px;text-align:center;font-size:10.5px;letter-spacing:-0.3px;color:#e8ebee">1</div><div class="t" style="left:797px;top:450.0px;width:60px;text-align:center;font-size:10.5px;letter-spacing:-0.3px;color:#e8ebee">0.9</div><div class="t" style="left:857px;top:450.0px;width:63px;text-align:center;font-size:10.5px;letter-spacing:-0.3px;color:#e8ebee">-1282.63</div><div class="t" style="left:920px;top:450.0px;width:94px;text-align:center;font-size:10.5px;letter-spacing:-0.3px;color:#e8ebee">986.81</div><div class="t" style="left:1014px;top:450.0px;width:74px;text-align:center;font-size:10.5px;letter-spacing:-0.3px;color:#e8ebee">170721.45</div><div class="t" style="left:1088px;top:450.0px;width:74px;text-align:center;font-size:10.5px;letter-spacing:-0.3px;color:#e8ebee">9.52</div><div class="t" style="left:1162px;top:450.0px;width:71px;text-align:center;font-size:10.5px;letter-spacing:-0.3px;color:#6470e0">117572 <svg width="7" height="5" viewBox="0 0 7 5" style="vertical-align:middle"><path d="M0.8 1 L3.5 3.8 L6.2 1" fill="none" stroke="#7a84a8" stroke-width="0.9"/></svg></div><div class="t" style="left:1241.5px;top:450.5px;font-size:10.5px;color:#6470e0;letter-spacing:-0.6px">PDF</div><div class="t" style="left:1271.5px;top:450.5px;font-size:10px;color:#6470e0">图片</div><div class="t" style="left:1304.5px;top:450.5px;font-size:10px;color:#6470e0">详情</div><div class="t" style="left:1338px;top:450.5px;font-size:10px;color:#6470e0">重新生成</div><div class="a" style="left:1265px;top:451px;width:1px;height:9px;background:#3a4452"></div><div class="a" style="left:1298px;top:451px;width:1px;height:9px;background:#3a4452"></div><div class="a" style="left:1331px;top:451px;width:1px;height:9px;background:#3a4452"></div><div class="a" style="left:187px;top:472px;width:1201px;height:35px;background:#1b2632"></div><div class="a" style="left:187px;top:506px;width:1201px;height:1px;background:#2b3743"></div><div class="t" style="left:187px;top:477.0px;width:64px;text-align:center;font-size:11px;letter-spacing:-0.5px;color:#eceff2">2020-09</div><div class="t" style="left:187px;top:493.0px;width:64px;text-align:center;font-size:10px;letter-spacing:-0.5px;color:#8a949f">08/23-09/22</div><div class="t" style="left:251px;top:484.0px;width:66px;text-align:center;font-size:10.5px;letter-spacing:-0.3px;color:#e8ebee">25980.92</div><div class="t" style="left:317px;top:484.0px;width:56px;text-align:center;font-size:10.5px;letter-spacing:-0.3px;color:#e8ebee">28.95%</div><div class="t" style="left:373px;top:484.0px;width:56px;text-align:center;font-size:10.5px;letter-spacing:-0.3px;color:#e8ebee">50.05%</div><div class="t" style="left:429px;top:484.0px;width:57px;text-align:center;font-size:10.5px;letter-spacing:-0.3px;color:#e8ebee">21%</div><div class="t" style="left:486px;top:484.0px;width:67px;text-align:center;font-size:10.5px;letter-spacing:-0.3px;color:#e8ebee">12609.66</div><div class="t" style="left:553px;top:484.0px;width:71px;text-align:center;font-size:10.5px;letter-spacing:-0.3px;color:#e8ebee">2483</div><div class="t" style="left:624px;top:484.0px;width:58px;text-align:center;font-size:10.5px;letter-spacing:-0.3px;color:#e8ebee">1000</div><div class="t" style="left:682px;top:484.0px;width:57px;text-align:center;font-size:10.5px;letter-spacing:-0.3px;color:#e8ebee">162372</div><div class="t" style="left:739px;top:484.0px;width:58px;text-align:center;font-size:10.5px;letter-spacing:-0.3px;color:#e8ebee">1</div><div class="t" style="left:797px;top:484.0px;width:60px;text-align:center;font-size:10.5px;letter-spacing:-0.3px;color:#e8ebee">0.9</div><div class="t" style="left:857px;top:484.0px;width:63px;text-align:center;font-size:10.5px;letter-spacing:-0.3px;color:#e8ebee">-1312.36</div><div class="t" style="left:920px;top:484.0px;width:94px;text-align:center;font-size:10.5px;letter-spacing:-0.3px;color:#e8ebee">1428.95</div><div class="t" style="left:1014px;top:484.0px;width:74px;text-align:center;font-size:10.5px;letter-spacing:-0.3px;color:#e8ebee">175098.24</div><div class="t" style="left:1088px;top:484.0px;width:74px;text-align:center;font-size:10.5px;letter-spacing:-0.3px;color:#e8ebee">6.74</div><div class="t" style="left:1162px;top:484.0px;width:71px;text-align:center;font-size:10.5px;letter-spacing:-0.3px;color:#6470e0">117572 <svg width="7" height="5" viewBox="0 0 7 5" style="vertical-align:middle"><path d="M0.8 1 L3.5 3.8 L6.2 1" fill="none" stroke="#7a84a8" stroke-width="0.9"/></svg></div><div class="t" style="left:1241.5px;top:484.5px;font-size:10.5px;color:#6470e0;letter-spacing:-0.6px">PDF</div><div class="t" style="left:1271.5px;top:484.5px;font-size:10px;color:#6470e0">图片</div><div class="t" style="left:1304.5px;top:484.5px;font-size:10px;color:#6470e0">详情</div><div class="t" style="left:1338px;top:484.5px;font-size:10px;color:#6470e0">重新生成</div><div class="a" style="left:1265px;top:485px;width:1px;height:9px;background:#3a4452"></div><div class="a" style="left:1298px;top:485px;width:1px;height:9px;background:#3a4452"></div><div class="a" style="left:1331px;top:485px;width:1px;height:9px;background:#3a4452"></div><div class="a" style="left:187px;top:507px;width:1201px;height:35px;background:#1b2632"></div><div class="a" style="left:187px;top:541px;width:1201px;height:1px;background:#2b3743"></div><div class="t" style="left:187px;top:512.0px;width:64px;text-align:center;font-size:11px;letter-spacing:-0.5px;color:#eceff2">2020-08</div><div class="t" style="left:187px;top:528.0px;width:64px;text-align:center;font-size:10px;letter-spacing:-0.5px;color:#8a949f">07/23-08/22</div><div class="t" style="left:251px;top:519.0px;width:66px;text-align:center;font-size:10.5px;letter-spacing:-0.3px;color:#e8ebee">21966.6</div><div class="t" style="left:317px;top:519.0px;width:56px;text-align:center;font-size:10.5px;letter-spacing:-0.3px;color:#e8ebee">27.67%</div><div class="t" style="left:373px;top:519.0px;width:56px;text-align:center;font-size:10.5px;letter-spacing:-0.3px;color:#e8ebee">52.12%</div><div class="t" style="left:429px;top:519.0px;width:57px;text-align:center;font-size:10.5px;letter-spacing:-0.3px;color:#e8ebee">20.21%</div><div class="t" style="left:486px;top:519.0px;width:67px;text-align:center;font-size:10.5px;letter-spacing:-0.3px;color:#e8ebee">10590.47</div><div class="t" style="left:553px;top:519.0px;width:71px;text-align:center;font-size:10.5px;letter-spacing:-0.3px;color:#e8ebee">2483</div><div class="t" style="left:624px;top:519.0px;width:58px;text-align:center;font-size:10.5px;letter-spacing:-0.3px;color:#e8ebee">1000</div><div class="t" style="left:682px;top:519.0px;width:57px;text-align:center;font-size:10.5px;letter-spacing:-0.3px;color:#e8ebee">162372</div><div class="t" style="left:739px;top:519.0px;width:58px;text-align:center;font-size:10.5px;letter-spacing:-0.3px;color:#e8ebee">1</div><div class="t" style="left:797px;top:519.0px;width:60px;text-align:center;font-size:10.5px;letter-spacing:-0.3px;color:#e8ebee">0.9</div><div class="t" style="left:857px;top:519.0px;width:63px;text-align:center;font-size:10.5px;letter-spacing:-0.3px;color:#e8ebee">-1297.22</div><div class="t" style="left:920px;top:519.0px;width:94px;text-align:center;font-size:10.5px;letter-spacing:-0.3px;color:#e8ebee">1208.16</div><div class="t" style="left:1014px;top:519.0px;width:74px;text-align:center;font-size:10.5px;letter-spacing:-0.3px;color:#e8ebee">172873.41</div><div class="t" style="left:1088px;top:519.0px;width:74px;text-align:center;font-size:10.5px;letter-spacing:-0.3px;color:#e8ebee">7.87</div><div class="t" style="left:1162px;top:519.0px;width:71px;text-align:center;font-size:10.5px;letter-spacing:-0.3px;color:#6470e0">117572 <svg width="7" height="5" viewBox="0 0 7 5" style="vertical-align:middle"><path d="M0.8 1 L3.5 3.8 L6.2 1" fill="none" stroke="#7a84a8" stroke-width="0.9"/></svg></div><div class="t" style="left:1241.5px;top:519.5px;font-size:10.5px;color:#6470e0;letter-spacing:-0.6px">PDF</div><div class="t" style="left:1271.5px;top:519.5px;font-size:10px;color:#6470e0">图片</div><div class="t" style="left:1304.5px;top:519.5px;font-size:10px;color:#6470e0">详情</div><div class="t" style="left:1338px;top:519.5px;font-size:10px;color:#6470e0">重新生成</div><div class="a" style="left:1265px;top:520px;width:1px;height:9px;background:#3a4452"></div><div class="a" style="left:1298px;top:520px;width:1px;height:9px;background:#3a4452"></div><div class="a" style="left:1331px;top:520px;width:1px;height:9px;background:#3a4452"></div><div class="a" style="left:187px;top:542px;width:1201px;height:34px;background:#1b2632"></div><div class="a" style="left:187px;top:575px;width:1201px;height:1px;background:#2b3743"></div><div class="t" style="left:187px;top:547.0px;width:64px;text-align:center;font-size:11px;letter-spacing:-0.5px;color:#eceff2">2020-07</div><div class="t" style="left:187px;top:563.0px;width:64px;text-align:center;font-size:10px;letter-spacing:-0.5px;color:#8a949f">06/23-07/22</div><div class="t" style="left:251px;top:554.0px;width:66px;text-align:center;font-size:10.5px;letter-spacing:-0.3px;color:#e8ebee">26103.23</div><div class="t" style="left:317px;top:554.0px;width:56px;text-align:center;font-size:10.5px;letter-spacing:-0.3px;color:#e8ebee">28.3%</div><div class="t" style="left:373px;top:554.0px;width:56px;text-align:center;font-size:10.5px;letter-spacing:-0.3px;color:#e8ebee">50.67%</div><div class="t" style="left:429px;top:554.0px;width:57px;text-align:center;font-size:10.5px;letter-spacing:-0.3px;color:#e8ebee">21.03%</div><div class="t" style="left:486px;top:554.0px;width:67px;text-align:center;font-size:10.5px;letter-spacing:-0.3px;color:#e8ebee">12514.98</div><div class="t" style="left:553px;top:554.0px;width:71px;text-align:center;font-size:10.5px;letter-spacing:-0.3px;color:#e8ebee">2483</div><div class="t" style="left:624px;top:554.0px;width:58px;text-align:center;font-size:10.5px;letter-spacing:-0.3px;color:#e8ebee">1000</div><div class="t" style="left:682px;top:554.0px;width:57px;text-align:center;font-size:10.5px;letter-spacing:-0.3px;color:#e8ebee">162372</div><div class="t" style="left:739px;top:554.0px;width:58px;text-align:center;font-size:10.5px;letter-spacing:-0.3px;color:#e8ebee">1</div><div class="t" style="left:797px;top:554.0px;width:60px;text-align:center;font-size:10.5px;letter-spacing:-0.3px;color:#e8ebee">0.9</div><div class="t" style="left:857px;top:554.0px;width:63px;text-align:center;font-size:10.5px;letter-spacing:-0.3px;color:#e8ebee">-1311.65</div><div class="t" style="left:920px;top:554.0px;width:94px;text-align:center;font-size:10.5px;letter-spacing:-0.3px;color:#e8ebee">1435.68</div><div class="t" style="left:1014px;top:554.0px;width:74px;text-align:center;font-size:10.5px;letter-spacing:-0.3px;color:#e8ebee">175011.01</div><div class="t" style="left:1088px;top:554.0px;width:74px;text-align:center;font-size:10.5px;letter-spacing:-0.3px;color:#e8ebee">6.7</div><div class="t" style="left:1162px;top:554.0px;width:71px;text-align:center;font-size:10.5px;letter-spacing:-0.3px;color:#6470e0">117572 <svg width="7" height="5" viewBox="0 0 7 5" style="vertical-align:middle"><path d="M0.8 1 L3.5 3.8 L6.2 1" fill="none" stroke="#7a84a8" stroke-width="0.9"/></svg></div><div class="t" style="left:1241.5px;top:554.5px;font-size:10.5px;color:#6470e0;letter-spacing:-0.6px">PDF</div><div class="t" style="left:1271.5px;top:554.5px;font-size:10px;color:#6470e0">图片</div><div class="t" style="left:1304.5px;top:554.5px;font-size:10px;color:#6470e0">详情</div><div class="t" style="left:1338px;top:554.5px;font-size:10px;color:#6470e0">重新生成</div><div class="a" style="left:1265px;top:555px;width:1px;height:9px;background:#3a4452"></div><div class="a" style="left:1298px;top:555px;width:1px;height:9px;background:#3a4452"></div><div class="a" style="left:1331px;top:555px;width:1px;height:9px;background:#3a4452"></div><div class="a" style="left:187px;top:576px;width:1201px;height:34px;background:#1b2632"></div><div class="a" style="left:187px;top:609px;width:1201px;height:1px;background:#2b3743"></div><div class="t" style="left:187px;top:581.0px;width:64px;text-align:center;font-size:11px;letter-spacing:-0.5px;color:#eceff2">2020-06</div><div class="t" style="left:187px;top:597.0px;width:64px;text-align:center;font-size:10px;letter-spacing:-0.5px;color:#8a949f">05/23-06/22</div><div class="t" style="left:251px;top:588.0px;width:66px;text-align:center;font-size:10.5px;letter-spacing:-0.3px;color:#e8ebee">27120.9</div><div class="t" style="left:317px;top:588.0px;width:56px;text-align:center;font-size:10.5px;letter-spacing:-0.3px;color:#e8ebee">28.67%</div><div class="t" style="left:373px;top:588.0px;width:56px;text-align:center;font-size:10.5px;letter-spacing:-0.3px;color:#e8ebee">51.08%</div><div class="t" style="left:429px;top:588.0px;width:57px;text-align:center;font-size:10.5px;letter-spacing:-0.3px;color:#e8ebee">20.25%</div><div class="t" style="left:486px;top:588.0px;width:67px;text-align:center;font-size:10.5px;letter-spacing:-0.3px;color:#e8ebee">13073.5</div><div class="t" style="left:553px;top:588.0px;width:71px;text-align:center;font-size:10.5px;letter-spacing:-0.3px;color:#e8ebee">2483</div><div class="t" style="left:624px;top:588.0px;width:58px;text-align:center;font-size:10.5px;letter-spacing:-0.3px;color:#e8ebee">2100</div><div class="t" style="left:682px;top:588.0px;width:57px;text-align:center;font-size:10.5px;letter-spacing:-0.3px;color:#e8ebee">79680</div><div class="t" style="left:739px;top:588.0px;width:58px;text-align:center;font-size:10.5px;letter-spacing:-0.3px;color:#e8ebee">1</div><div class="t" style="left:797px;top:588.0px;width:60px;text-align:center;font-size:10.5px;letter-spacing:-0.3px;color:#e8ebee">0.9</div><div class="t" style="left:857px;top:588.0px;width:63px;text-align:center;font-size:10.5px;letter-spacing:-0.3px;color:#e8ebee">-695.65</div><div class="t" style="left:920px;top:588.0px;width:94px;text-align:center;font-size:10.5px;letter-spacing:-0.3px;color:#e8ebee">-</div><div class="t" style="left:1014px;top:588.0px;width:74px;text-align:center;font-size:10.5px;letter-spacing:-0.3px;color:#e8ebee">92057.85</div><div class="t" style="left:1088px;top:588.0px;width:74px;text-align:center;font-size:10.5px;letter-spacing:-0.3px;color:#e8ebee">3.39</div><div class="t" style="left:1162px;top:588.0px;width:71px;text-align:center;font-size:10.5px;letter-spacing:-0.3px;color:#6470e0">17080 <svg width="7" height="5" viewBox="0 0 7 5" style="vertical-align:middle"><path d="M0.8 1 L3.5 3.8 L6.2 1" fill="none" stroke="#7a84a8" stroke-width="0.9"/></svg></div><div class="t" style="left:1241.5px;top:588.5px;font-size:10.5px;color:#6470e0;letter-spacing:-0.6px">PDF</div><div class="t" style="left:1271.5px;top:588.5px;font-size:10px;color:#6470e0">图片</div><div class="t" style="left:1304.5px;top:588.5px;font-size:10px;color:#6470e0">详情</div><div class="t" style="left:1338px;top:588.5px;font-size:10px;color:#6470e0">重新生成</div><div class="a" style="left:1265px;top:589px;width:1px;height:9px;background:#3a4452"></div><div class="a" style="left:1298px;top:589px;width:1px;height:9px;background:#3a4452"></div><div class="a" style="left:1331px;top:589px;width:1px;height:9px;background:#3a4452"></div><div class="a" style="left:187px;top:610px;width:1201px;height:35px;background:#1b2632"></div><div class="a" style="left:187px;top:644px;width:1201px;height:1px;background:#2b3743"></div><div class="t" style="left:187px;top:615.0px;width:64px;text-align:center;font-size:11px;letter-spacing:-0.5px;color:#eceff2">2020-05</div><div class="t" style="left:187px;top:631.0px;width:64px;text-align:center;font-size:10px;letter-spacing:-0.5px;color:#8a949f">04/23-05/22</div><div class="t" style="left:251px;top:622.0px;width:66px;text-align:center;font-size:10.5px;letter-spacing:-0.3px;color:#e8ebee">26081.31</div><div class="t" style="left:317px;top:622.0px;width:56px;text-align:center;font-size:10.5px;letter-spacing:-0.3px;color:#e8ebee">28.58%</div><div class="t" style="left:373px;top:622.0px;width:56px;text-align:center;font-size:10.5px;letter-spacing:-0.3px;color:#e8ebee">51.26%</div><div class="t" style="left:429px;top:622.0px;width:57px;text-align:center;font-size:10.5px;letter-spacing:-0.3px;color:#e8ebee">20.16%</div><div class="t" style="left:486px;top:622.0px;width:67px;text-align:center;font-size:10.5px;letter-spacing:-0.3px;color:#e8ebee">12571.15</div><div class="t" style="left:553px;top:622.0px;width:71px;text-align:center;font-size:10.5px;letter-spacing:-0.3px;color:#e8ebee">2483</div><div class="t" style="left:624px;top:622.0px;width:58px;text-align:center;font-size:10.5px;letter-spacing:-0.3px;color:#e8ebee">1000</div><div class="t" style="left:682px;top:622.0px;width:57px;text-align:center;font-size:10.5px;letter-spacing:-0.3px;color:#e8ebee">162372</div><div class="t" style="left:739px;top:622.0px;width:58px;text-align:center;font-size:10.5px;letter-spacing:-0.3px;color:#e8ebee">1</div><div class="t" style="left:797px;top:622.0px;width:60px;text-align:center;font-size:10.5px;letter-spacing:-0.3px;color:#e8ebee">0.9</div><div class="t" style="left:857px;top:622.0px;width:63px;text-align:center;font-size:10.5px;letter-spacing:-0.3px;color:#e8ebee">-1312.07</div><div class="t" style="left:920px;top:622.0px;width:94px;text-align:center;font-size:10.5px;letter-spacing:-0.3px;color:#e8ebee">1434.47</div><div class="t" style="left:1014px;top:622.0px;width:74px;text-align:center;font-size:10.5px;letter-spacing:-0.3px;color:#e8ebee">175065.55</div><div class="t" style="left:1088px;top:622.0px;width:74px;text-align:center;font-size:10.5px;letter-spacing:-0.3px;color:#e8ebee">6.71</div><div class="t" style="left:1162px;top:622.0px;width:71px;text-align:center;font-size:10.5px;letter-spacing:-0.3px;color:#6470e0">117572 <svg width="7" height="5" viewBox="0 0 7 5" style="vertical-align:middle"><path d="M0.8 1 L3.5 3.8 L6.2 1" fill="none" stroke="#7a84a8" stroke-width="0.9"/></svg></div><div class="t" style="left:1241.5px;top:622.5px;font-size:10.5px;color:#6470e0;letter-spacing:-0.6px">PDF</div><div class="t" style="left:1271.5px;top:622.5px;font-size:10px;color:#6470e0">图片</div><div class="t" style="left:1304.5px;top:622.5px;font-size:10px;color:#6470e0">详情</div><div class="t" style="left:1338px;top:622.5px;font-size:10px;color:#6470e0">重新生成</div><div class="a" style="left:1265px;top:623px;width:1px;height:9px;background:#3a4452"></div><div class="a" style="left:1298px;top:623px;width:1px;height:9px;background:#3a4452"></div><div class="a" style="left:1331px;top:623px;width:1px;height:9px;background:#3a4452"></div><div class="a" style="left:187px;top:645px;width:1201px;height:35px;background:#1b2632"></div><div class="a" style="left:187px;top:679px;width:1201px;height:1px;background:#2b3743"></div><div class="t" style="left:187px;top:650.0px;width:64px;text-align:center;font-size:11px;letter-spacing:-0.5px;color:#eceff2">2020-04</div><div class="t" style="left:187px;top:666.0px;width:64px;text-align:center;font-size:10px;letter-spacing:-0.5px;color:#8a949f">03/23-04/22</div><div class="t" style="left:251px;top:657.0px;width:66px;text-align:center;font-size:10.5px;letter-spacing:-0.3px;color:#e8ebee">27261.64</div><div class="t" style="left:317px;top:657.0px;width:56px;text-align:center;font-size:10.5px;letter-spacing:-0.3px;color:#e8ebee">29.05%</div><div class="t" style="left:373px;top:657.0px;width:56px;text-align:center;font-size:10.5px;letter-spacing:-0.3px;color:#e8ebee">50.7%</div><div class="t" style="left:429px;top:657.0px;width:57px;text-align:center;font-size:10.5px;letter-spacing:-0.3px;color:#e8ebee">20.25%</div><div class="t" style="left:486px;top:657.0px;width:67px;text-align:center;font-size:10.5px;letter-spacing:-0.3px;color:#e8ebee">13162.91</div><div class="t" style="left:553px;top:657.0px;width:71px;text-align:center;font-size:10.5px;letter-spacing:-0.3px;color:#e8ebee">2483</div><div class="t" style="left:624px;top:657.0px;width:58px;text-align:center;font-size:10.5px;letter-spacing:-0.3px;color:#e8ebee">1000</div><div class="t" style="left:682px;top:657.0px;width:57px;text-align:center;font-size:10.5px;letter-spacing:-0.3px;color:#e8ebee">162372</div><div class="t" style="left:739px;top:657.0px;width:58px;text-align:center;font-size:10.5px;letter-spacing:-0.3px;color:#e8ebee">1</div><div class="t" style="left:797px;top:657.0px;width:60px;text-align:center;font-size:10.5px;letter-spacing:-0.3px;color:#e8ebee">0.9</div><div class="t" style="left:857px;top:657.0px;width:63px;text-align:center;font-size:10.5px;letter-spacing:-0.3px;color:#e8ebee">-1316.51</div><div class="t" style="left:920px;top:657.0px;width:94px;text-align:center;font-size:10.5px;letter-spacing:-0.3px;color:#e8ebee">1499.39</div><div class="t" style="left:1014px;top:657.0px;width:74px;text-align:center;font-size:10.5px;letter-spacing:-0.3px;color:#e8ebee">175717.78</div><div class="t" style="left:1088px;top:657.0px;width:74px;text-align:center;font-size:10.5px;letter-spacing:-0.3px;color:#e8ebee">6.45</div><div class="t" style="left:1162px;top:657.0px;width:71px;text-align:center;font-size:10.5px;letter-spacing:-0.3px;color:#6470e0">117572 <svg width="7" height="5" viewBox="0 0 7 5" style="vertical-align:middle"><path d="M0.8 1 L3.5 3.8 L6.2 1" fill="none" stroke="#7a84a8" stroke-width="0.9"/></svg></div><div class="t" style="left:1241.5px;top:657.5px;font-size:10.5px;color:#6470e0;letter-spacing:-0.6px">PDF</div><div class="t" style="left:1271.5px;top:657.5px;font-size:10px;color:#6470e0">图片</div><div class="t" style="left:1304.5px;top:657.5px;font-size:10px;color:#6470e0">详情</div><div class="t" style="left:1338px;top:657.5px;font-size:10px;color:#6470e0">重新生成</div><div class="a" style="left:1265px;top:658px;width:1px;height:9px;background:#3a4452"></div><div class="a" style="left:1298px;top:658px;width:1px;height:9px;background:#3a4452"></div><div class="a" style="left:1331px;top:658px;width:1px;height:9px;background:#3a4452"></div><div class="a" style="left:186px;top:295px;width:1px;height:384px;background:#28333f"></div><div class="a" style="left:250px;top:295px;width:1px;height:384px;background:#28333f"></div><div class="a" style="left:316px;top:324px;width:1px;height:355px;background:#28333f"></div><div class="a" style="left:372px;top:324px;width:1px;height:355px;background:#28333f"></div><div class="a" style="left:428px;top:324px;width:1px;height:355px;background:#28333f"></div><div class="a" style="left:485px;top:324px;width:1px;height:355px;background:#28333f"></div><div class="a" style="left:552px;top:295px;width:1px;height:384px;background:#28333f"></div><div class="a" style="left:623px;top:324px;width:1px;height:355px;background:#28333f"></div><div class="a" style="left:681px;top:324px;width:1px;height:355px;background:#28333f"></div><div class="a" style="left:738px;top:295px;width:1px;height:384px;background:#28333f"></div><div class="a" style="left:796px;top:324px;width:1px;height:355px;background:#28333f"></div><div class="a" style="left:856px;top:324px;width:1px;height:355px;background:#28333f"></div><div class="a" style="left:919px;top:295px;width:1px;height:384px;background:#28333f"></div><div class="a" style="left:1013px;top:295px;width:1px;height:384px;background:#28333f"></div><div class="a" style="left:1087px;top:295px;width:1px;height:384px;background:#28333f"></div><div class="a" style="left:1161px;top:295px;width:1px;height:384px;background:#28333f"></div><div class="a" style="left:1232px;top:295px;width:1px;height:384px;background:#28333f"></div><div class="a" style="left:1387px;top:295px;width:1px;height:384px;background:#28333f"></div>
</body></html>
